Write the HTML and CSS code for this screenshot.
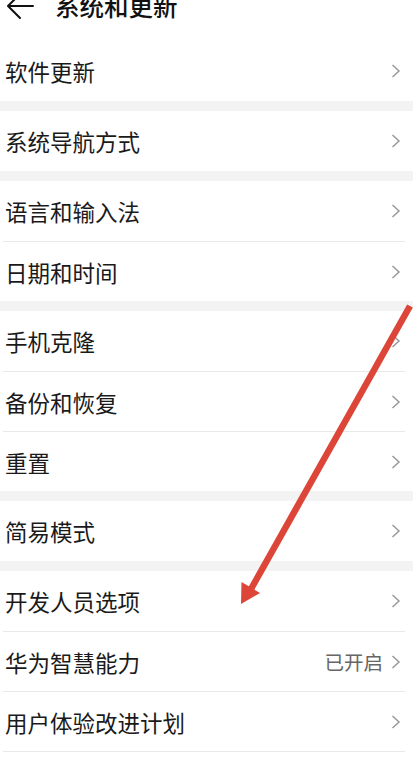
FILE: index.html
```html
<!DOCTYPE html>
<html lang="zh-CN">
<head>
<meta charset="utf-8">
<title>系统和更新</title>
<link rel="stylesheet" href="styles.css">
</head>
<body>
<div class="page">
  <header class="topbar">
    <div class="topbar-inner">
      <svg class="back" width="28" height="28" viewBox="0 0 28 28"><path d="M27 14 H3 M14 2 L2 14 L14 26" fill="none" stroke="#111" stroke-width="2" stroke-linecap="round" stroke-linejoin="round"/></svg>
      <span class="title">系统和更新</span>
    </div>
  </header>

  <section class="group">
    <div class="row"><span class="label">软件更新</span><span class="chev"><svg width="10" height="14" viewBox="0 0 10 14"><path d="M1.5 1 L8 7 L1.5 13" fill="none" stroke="#9a9a9a" stroke-width="1.5"/></svg></span></div>
  </section>
  <div class="band"></div>
  <section class="group">
    <div class="row"><span class="label">系统导航方式</span><span class="chev"><svg width="10" height="14" viewBox="0 0 10 14"><path d="M1.5 1 L8 7 L1.5 13" fill="none" stroke="#9a9a9a" stroke-width="1.5"/></svg></span></div>
  </section>
  <div class="band"></div>
  <section class="group">
    <div class="row"><span class="label">语言和输入法</span><span class="chev"><svg width="10" height="14" viewBox="0 0 10 14"><path d="M1.5 1 L8 7 L1.5 13" fill="none" stroke="#9a9a9a" stroke-width="1.5"/></svg></span></div>
    <div class="row"><span class="label">日期和时间</span><span class="chev"><svg width="10" height="14" viewBox="0 0 10 14"><path d="M1.5 1 L8 7 L1.5 13" fill="none" stroke="#9a9a9a" stroke-width="1.5"/></svg></span></div>
  </section>
  <div class="band"></div>
  <section class="group">
    <div class="row"><span class="label">手机克隆</span><span class="chev"><svg width="10" height="14" viewBox="0 0 10 14"><path d="M1.5 1 L8 7 L1.5 13" fill="none" stroke="#9a9a9a" stroke-width="1.5"/></svg></span></div>
    <div class="row"><span class="label">备份和恢复</span><span class="chev"><svg width="10" height="14" viewBox="0 0 10 14"><path d="M1.5 1 L8 7 L1.5 13" fill="none" stroke="#9a9a9a" stroke-width="1.5"/></svg></span></div>
    <div class="row"><span class="label">重置</span><span class="chev"><svg width="10" height="14" viewBox="0 0 10 14"><path d="M1.5 1 L8 7 L1.5 13" fill="none" stroke="#9a9a9a" stroke-width="1.5"/></svg></span></div>
  </section>
  <div class="band"></div>
  <section class="group">
    <div class="row"><span class="label">简易模式</span><span class="chev"><svg width="10" height="14" viewBox="0 0 10 14"><path d="M1.5 1 L8 7 L1.5 13" fill="none" stroke="#9a9a9a" stroke-width="1.5"/></svg></span></div>
  </section>
  <div class="band"></div>
  <section class="group">
    <div class="row"><span class="label">开发人员选项</span><span class="chev"><svg width="10" height="14" viewBox="0 0 10 14"><path d="M1.5 1 L8 7 L1.5 13" fill="none" stroke="#9a9a9a" stroke-width="1.5"/></svg></span></div>
    <div class="row"><span class="label">华为智慧能力</span><span class="value">已开启</span><span class="chev"><svg width="10" height="14" viewBox="0 0 10 14"><path d="M1.5 1 L8 7 L1.5 13" fill="none" stroke="#9a9a9a" stroke-width="1.5"/></svg></span></div>
    <div class="row row-last"><span class="label">用户体验改进计划</span><span class="chev"><svg width="10" height="14" viewBox="0 0 10 14"><path d="M1.5 1 L8 7 L1.5 13" fill="none" stroke="#9a9a9a" stroke-width="1.5"/></svg></span></div>
  </section>

  <svg class="annotation" width="413" height="757" viewBox="0 0 413 757">
    <line x1="410" y1="306" x2="251" y2="589" stroke="#dc4538" stroke-width="6.5"/>
    <polygon points="241,604 241.5,582 260,593" fill="#dc4538"/>
  </svg>
</div>
</body>
</html>
```

FILE: styles.css
```css
* { box-sizing: border-box; }

html, body {
  margin: 0;
  padding: 0;
  background: #ffffff;
}

body {
  font-family: "Noto Sans CJK SC", "Noto Sans", sans-serif;
  color: #1a1a1a;
  width: 413px;
  height: 757px;
  overflow: hidden;
}

.page {
  position: relative;
  width: 413px;
  height: 757px;
}

.topbar {
  height: 41px;
  display: flex;
  align-items: flex-start;
}

.topbar-inner {
  margin-top: -8px;
  height: 28px;
  padding-left: 6px;
  display: flex;
  align-items: center;
}

.back {
  flex: none;
}

.title {
  margin-left: 21px;
  font-size: 24.5px;
  line-height: 28px;
  color: #111;
  font-weight: 500;
}

.group {
  padding: 0 8px 0 3px;
}

.row {
  height: 60px;
  display: flex;
  align-items: center;
  padding: 0 4px 0 2px;
}

.row + .row {
  border-top: 1px solid #e9e9e9;
}

.row-last {
  height: 61px;
  border-bottom: 1px solid #e9e9e9;
}

.label {
  flex: 1;
  font-size: 22.5px;
  line-height: 30px;
  color: #1a1a1a;
}

.value {
  font-size: 19.5px;
  line-height: 26px;
  color: #666;
  margin-right: 8px;
}

.chev {
  display: flex;
  align-items: center;
}

.band {
  height: 10px;
  background: #f3f3f3;
}

.annotation {
  position: absolute;
  left: 0;
  top: 0;
  pointer-events: none;
}
```
